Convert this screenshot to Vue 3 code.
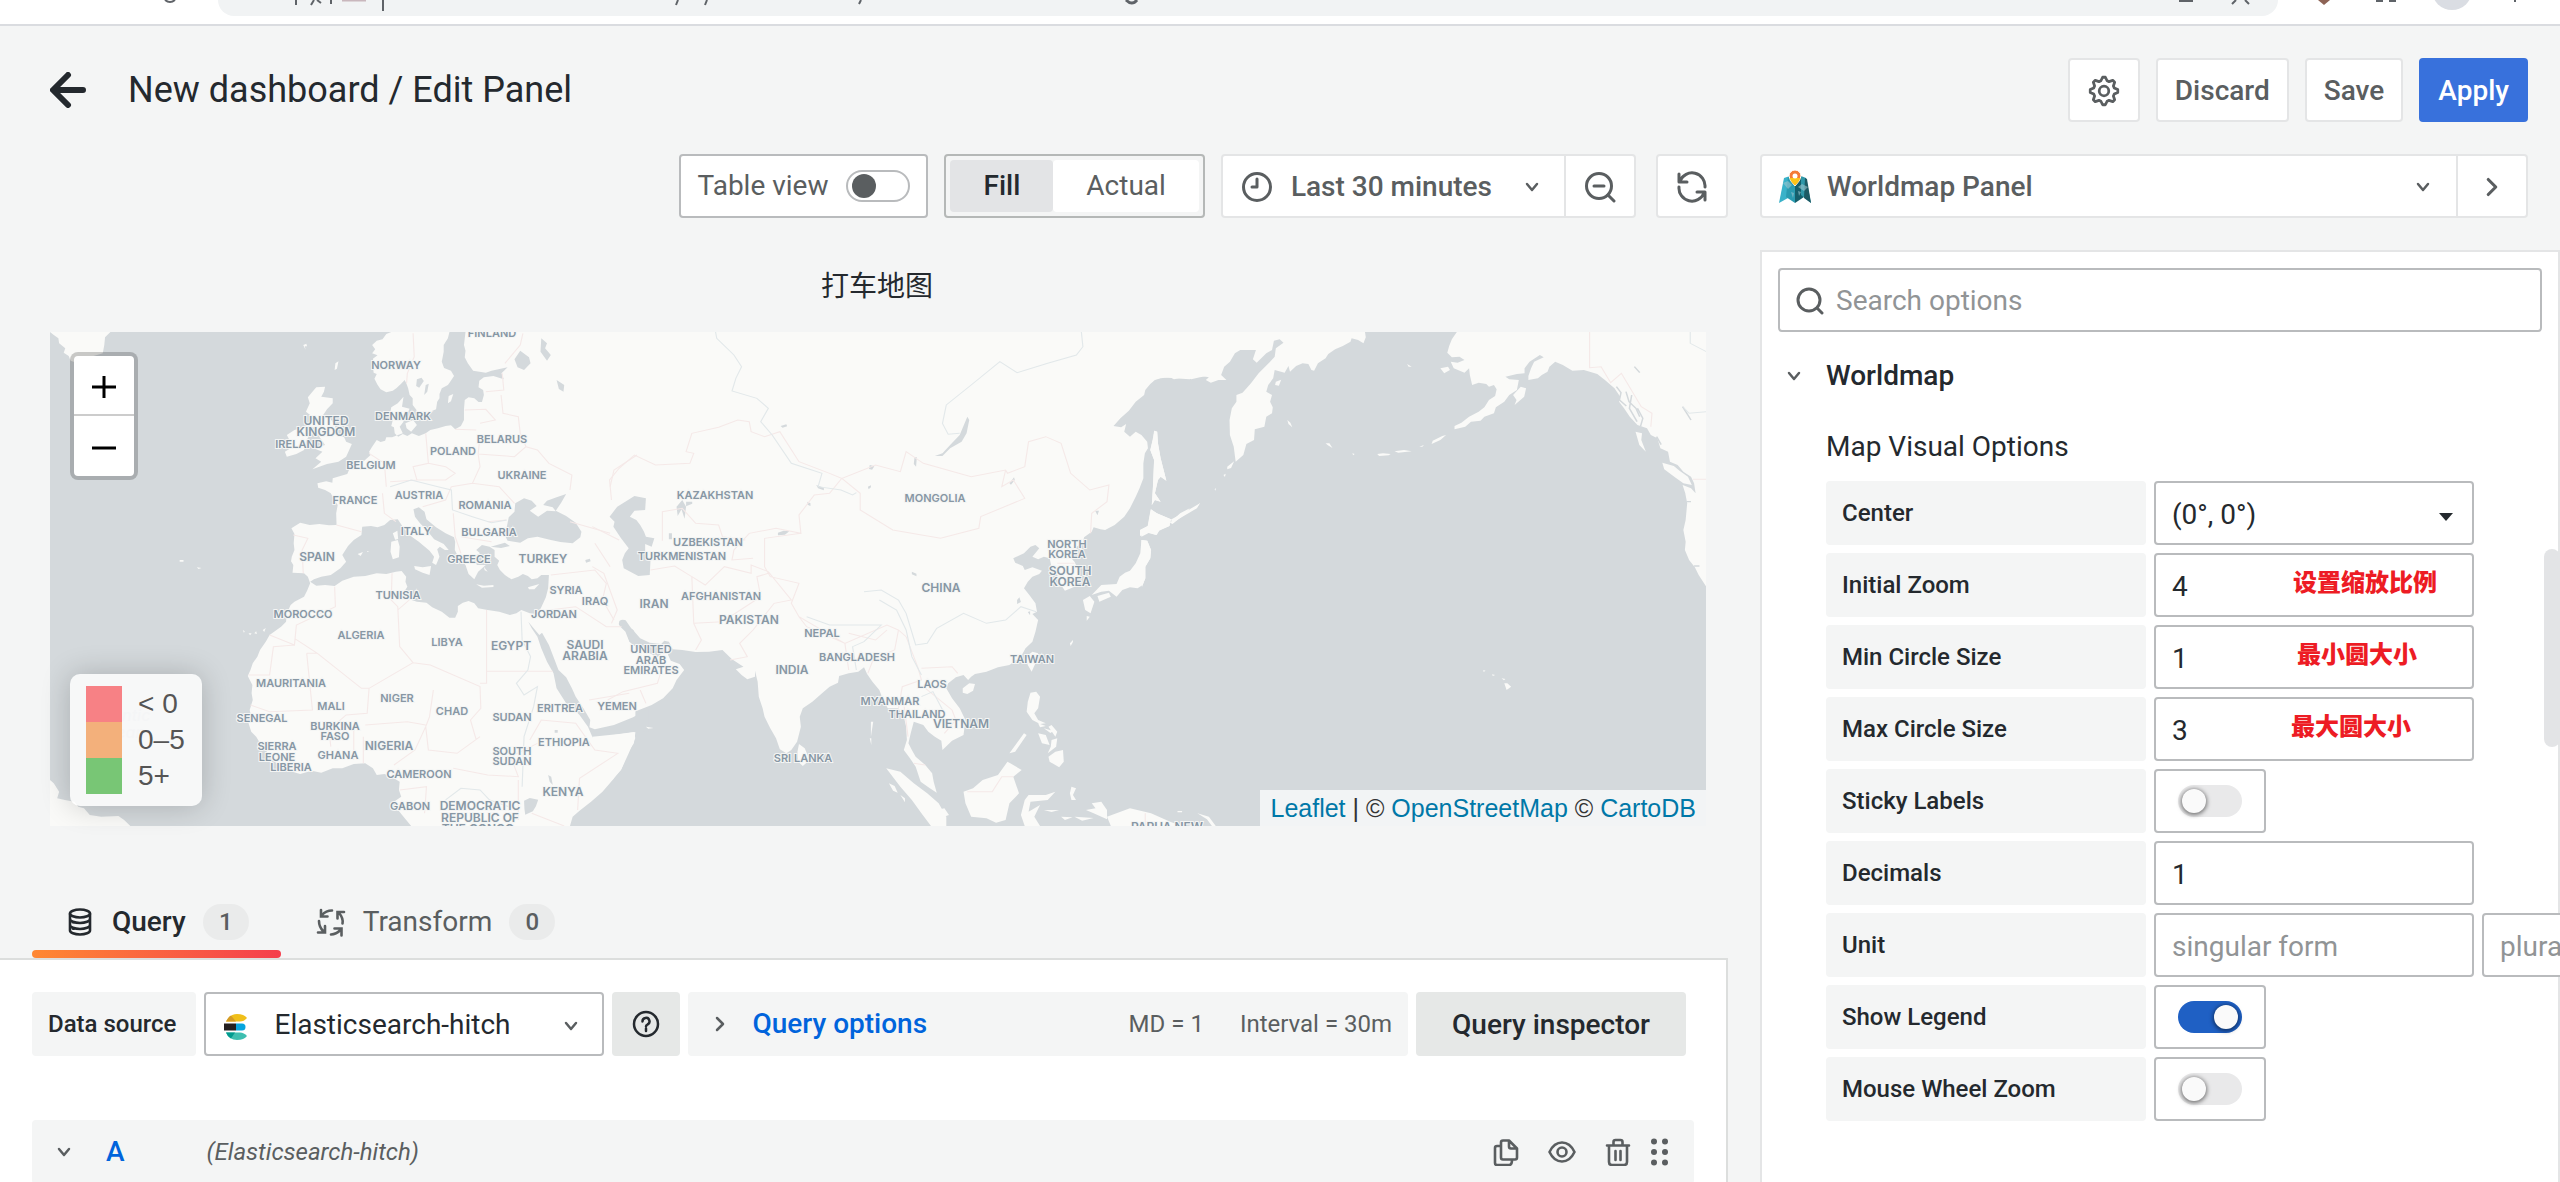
<script setup>
import { ref } from 'vue'

const tableView = ref(false)
const display = ref('Fill')
const dataSource = ref('Elasticsearch-hitch')
const center = ref('(0°, 0°)')
const search = ref('')

const options = ref([
  { id: 'center', label: 'Center', kind: 'select' },
  { id: 'zoom', label: 'Initial Zoom', kind: 'text', value: '4', note: '设置缩放比例', end: 37 },
  { id: 'min-circle', label: 'Min Circle Size', kind: 'text', value: '1', note: '最小圆大小', end: 57 },
  { id: 'max-circle', label: 'Max Circle Size', kind: 'text', value: '3', note: '最大圆大小', end: 63 },
  { id: 'sticky', label: 'Sticky Labels', kind: 'switch', value: false },
  { id: 'decimals', label: 'Decimals', kind: 'text', value: '1' },
  { id: 'unit', label: 'Unit', kind: 'unit', value: '', plural: '' },
  { id: 'legend', label: 'Show Legend', kind: 'switch', value: true },
  { id: 'wheel', label: 'Mouse Wheel Zoom', kind: 'switch', value: false }
])

const legend = [
  { text: '< 0', color: '#f77c80' },
  { text: '0–5', color: '#f2ad76' },
  { text: '5+', color: '#73c46f' }
]

const gear = (() => {
  const points = []
  const radii = [13, 13, 10, 10]
  for (let i = 0; i < 32; i++) {
    const a = ((i - 0.5) * 11.25 * Math.PI) / 180
    const r = radii[i % 4]
    points.push(`${(15 + r * Math.sin(a)).toFixed(1)} ${(15 - r * Math.cos(a)).toFixed(1)}`)
  }
  return 'M' + points.join('L') + 'Z'
})()

// country names: text, centre x, baseline y, size
const countries = [
  ['FINLAND', 442, 5, 11], ['NORWAY', 346, 37, 11], ['DENMARK', 353, 88, 11],
  ['UNITED', 276, 93, 12], ['KINGDOM', 276, 104, 12], ['IRELAND', 249, 116, 11],
  ['BELARUS', 452, 111, 11], ['POLAND', 403, 123, 11], ['BELGIUM', 321, 137, 11],
  ['UKRAINE', 472, 147, 11], ['FRANCE', 305, 172, 11], ['AUSTRIA', 369, 167, 11],
  ['ROMANIA', 435, 177, 11], ['ITALY', 366, 203, 11], ['BULGARIA', 439, 204, 11],
  ['SPAIN', 267, 229, 12], ['GREECE', 419, 231, 11], ['TURKEY', 493, 231, 12],
  ['TUNISIA', 348, 267, 11], ['SYRIA', 516, 262, 11], ['IRAQ', 545, 273, 11],
  ['MOROCCO', 253, 286, 11], ['JORDAN', 504, 286, 11], ['ALGERIA', 311, 307, 11],
  ['LIBYA', 397, 314, 11], ['EGYPT', 461, 318, 12], ['SAUDI', 535, 317, 12],
  ['ARABIA', 535, 328, 12], ['MAURITANIA', 241, 355, 11], ['NIGER', 347, 370, 11],
  ['MALI', 281, 378, 11], ['CHAD', 402, 383, 11], ['SENEGAL', 212, 390, 11],
  ['SUDAN', 462, 389, 11], ['ERITREA', 510, 380, 11], ['YEMEN', 567, 378, 11],
  ['BURKINA', 285, 398, 11], ['FASO', 285, 408, 11], ['NIGERIA', 339, 418, 12],
  ['SIERRA', 227, 418, 11], ['LEONE', 227, 429, 11], ['GHANA', 288, 427, 11],
  ['LIBERIA', 241, 439, 11], ['SOUTH', 462, 423, 11], ['SUDAN', 462, 433, 11],
  ['ETHIOPIA', 514, 414, 11], ['CAMEROON', 369, 446, 11], ['KENYA', 513, 464, 12],
  ['GABON', 360, 478, 11], ['DEMOCRATIC', 430, 478, 12], ['REPUBLIC OF', 430, 490, 12],
  ['THE CONGO', 428, 501, 12], ['KAZAKHSTAN', 665, 167, 11], ['UZBEKISTAN', 658, 214, 11],
  ['TURKMENISTAN', 632, 228, 11], ['IRAN', 604, 276, 12], ['AFGHANISTAN', 671, 268, 11],
  ['PAKISTAN', 699, 292, 12], ['UNITED', 601, 321, 11], ['ARAB', 601, 332, 11],
  ['EMIRATES', 601, 342, 11], ['NEPAL', 772, 305, 11], ['BANGLADESH', 807, 329, 11],
  ['INDIA', 742, 342, 12], ['SRI LANKA', 753, 430, 11], ['MYANMAR', 840, 373, 11],
  ['LAOS', 882, 356, 11], ['THAILAND', 867, 386, 11], ['VIETNAM', 911, 396, 12],
  ['CHINA', 891, 260, 12], ['MONGOLIA', 885, 170, 11], ['NORTH', 1017, 216, 11],
  ['KOREA', 1017, 226, 11], ['SOUTH', 1020, 243, 12], ['KOREA', 1020, 254, 12],
  ['TAIWAN', 982, 331, 11], ['PAPUA NEW', 1117, 499, 12]
]
</script>

<template>
  <div class="app">
    <svg class="sprite" aria-hidden="true">
      <symbol id="down" viewBox="0 0 16 16"><path d="M3 5l5 6 5-6" fill="none" stroke="currentColor" stroke-width="2.500" stroke-linecap="round" stroke-linejoin="round" /></symbol>
      <symbol id="right" viewBox="0 0 16 16"><path d="M5 2l6 6-6 6" fill="none" stroke="currentColor" stroke-width="2.500" stroke-linecap="round" stroke-linejoin="round" /></symbol>
    </svg>

    <div class="browser">
      <svg class="marks left" width="700" height="8" viewBox="0 0 700 8" fill="none" stroke="#5f6368" stroke-width="2">
        <path d="M-54 0q5 4 10 0M77 0v5M95 0l-3 5M98 0l4 3M112 0v4M164 0v11" />
        <path d="M123 0h24" stroke="#c9b7bd" stroke-width="3" />
        <path d="M459 0l-2 5M488 0l-2 5M642 0l-2 4" />
      </svg>
      <svg class="marks mid" width="16" height="8" viewBox="0 0 16 8"><path d="M2 0q6 6 11 0" fill="none" stroke="#5f6368" stroke-width="3" /></svg>
      <svg class="marks end" width="400" height="18" viewBox="0 0 400 18" fill="none" stroke="#5f6368" stroke-width="2">
        <path d="M20 0v1h12v-1M76 0l-4 4M85 0l4 4M216 1h7M229 1h7M355 0v2" />
        <path d="M158 0l6 5 6-5z" fill="#8d6355" stroke="none" />
        <circle cx="292" cy="-10" r="20" fill="#dadde3" stroke="none" />
      </svg>
    </div>

    <header class="header">
      <button class="back" aria-label="Back">
        <svg width="36" height="36" viewBox="0 0 36 36"><path d="M33 18H4M18 3L3 18l15 15" fill="none" stroke="currentColor" stroke-width="6" stroke-linecap="round" stroke-linejoin="round" /></svg>
      </button>
      <h1>New dashboard / Edit Panel</h1>
      <div class="actions">
        <button class="btn cog" aria-label="Settings">
          <svg width="32" height="32" viewBox="0 0 30 30" fill="none" stroke="currentColor" stroke-width="2.600" stroke-linejoin="round"><path :d="gear" /><circle cx="15" cy="15" r="4.500" /></svg>
        </button>
        <button class="btn">Discard</button>
        <button class="btn">Save</button>
        <button class="btn primary">Apply</button>
      </div>
    </header>

    <main class="body">
      <section class="left">
        <div class="toolbar">
          <label class="table-view">Table view <input v-model="tableView" class="switch outlined" type="checkbox"></label>
          <div class="radio">
            <label v-for="d in ['Fill', 'Actual']" :key="d" :class="{ on: display === d }"><input v-model="display" type="radio" name="display" :value="d">{{ d }}</label>
          </div>
          <div class="group">
            <button class="btn time">
              <svg width="32" height="32" viewBox="0 0 32 32" fill="none" stroke="currentColor" stroke-width="3"><circle cx="16" cy="16" r="13.5" /><path d="M16 8v8h-5" stroke-linecap="round" stroke-linejoin="round" /></svg>
              Last 30 minutes
              <svg class="caret" width="16" height="16"><use href="#down" /></svg>
            </button>
            <button class="btn tool" aria-label="Zoom out">
              <svg width="32" height="32" viewBox="0 0 32 32" fill="none" stroke="currentColor" stroke-width="3" stroke-linecap="round"><circle cx="15" cy="15" r="12.5" /><path d="M24 24l6 6M10 15h10" /></svg>
            </button>
          </div>
          <button class="btn tool refresh" aria-label="Refresh">
            <svg width="32" height="32" viewBox="0 0 32 32" fill="none" stroke="currentColor" stroke-width="3" stroke-linecap="round" stroke-linejoin="round"><path d="M3 3v8h8M4 10A13 13 0 0 1 29 16M29 29v-8h-8M28 22A13 13 0 0 1 3 16" /></svg>
          </button>
        </div>

        <h2 class="panel-title">打车地图</h2>

        <div class="map">
          <svg class="tiles" viewBox="0 0 1656 494" preserveAspectRatio="xMinYMin slice" role="img" aria-label="World map">
            <rect width="1656" height="494" fill="#d4d9dc" />
            <!-- Europe and Africa -->
            <g transform="translate(-10 -12) scale(.38265 .33333)" fill="#fafaf8">
              <path d="M26 36H184L170 52 168 75 164 100 140 108 110 118 95 128 80 122 75 108 62 98 66 85 50 70 48 55 36 45 26 36ZM26 1380L36 1390 50 1415 45 1435 65 1440 90 1445 100 1460 115 1465 130 1485 160 1490 205 1488 220 1500 236 1518H26Z" />
              <path d="M918 36L905 42 895 58 880 62 868 75 876 88 868 100 882 106 870 116 872 128 884 132 870 142 872 158 880 162 874 176 882 194 890 208 905 217 922 212 932 204 945 190 953 180 958 192 962 205 966 225 974 235 974 255 984 270 982 282 992 287 1004 288 1008 278 1018 276 1035 268 1038 245 1044 235 1044 222 1050 205 1066 195 1072 185 1082 168 1074 152 1056 144 1050 125 1055 95 1055 75 1066 55 1070 36Z" />
              <path d="M1112 36L1108 75 1112 92 1110 112 1118 130 1132 152 1165 158 1180 152 1222 142 1206 160 1212 178 1185 168 1160 172 1148 182 1146 202 1158 210 1160 225 1155 246 1146 246 1135 235 1120 232 1110 240 1108 268 1108 300 1100 318 1085 328 1074 316 1060 318 1040 325 1020 330 1008 340 990 348 972 340 960 348 948 342 936 350 927 340 925 322 918 318 922 300 914 285 918 262 935 250 950 230 946 260 966 266 960 280 948 288 950 305 940 320 948 340 920 352 905 352 902 362 890 366 880 360 868 380 860 395 864 405 840 430 812 438 803 462 785 468 765 475 764 488 748 484 725 490 727 503 745 510 760 520 768 538 778 555 774 580 775 615 755 616 730 612 705 615 680 608 657 625 665 642 663 670 665 690 658 710 656 724 662 735 660 758 690 760 700 770 706 790 698 812 690 830 665 845 655 855 645 880 643 905 630 920 600 945 590 965 575 990 568 1010 556 1030 550 1050 543 1068 555 1095 553 1120 556 1140 548 1170 552 1190 545 1210 552 1235 565 1250 578 1275 590 1290 600 1310 625 1338 650 1352 680 1362 710 1352 735 1358 765 1345 790 1345 820 1332 850 1330 870 1345 880 1365 900 1362 915 1368 940 1385 938 1410 944 1430 925 1445 932 1465 950 1490 970 1518H1385L1392 1490 1410 1472 1440 1445 1470 1415 1498 1378 1520 1345 1535 1300 1552 1270 1556 1237V36Z" />
              <path d="M712 215L722 202 745 200 742 215 735 230 765 235 765 250 750 268 740 285 760 298 770 315 780 345 795 352 800 365 815 372 808 390 800 410 780 425 750 432 730 440 712 448 735 425 720 415 738 395 715 385 745 375 730 350 722 325 700 318 712 290 695 275 705 250 700 232ZM645 345L665 330 690 322 708 335 695 365 690 390 670 402 645 410 640 395 655 385 645 372 652 360ZM640 965L650 960V965ZM530 930l5 4-2 4zM545 940l8 0-4 6zM560 940l5 -6 2 8zM582 930l8-6-4 12zM365 720h10v5h-10zM410 742l12 2-8 3zM688 75l8-4 2 8-6 0 2 10zM772 130l8-6-4 22-6 4z" />
              <g fill="#d4d9dc">
                <path d="M706 785L722 797 745 795 770 798 790 782 820 770 850 768 880 760 905 762 930 755 945 753 957 770 955 785 960 800 950 818 965 838 985 845 1010 848 1025 862 1050 875 1070 893 1085 893 1092 875 1092 858 1105 848 1120 843 1135 850 1145 865 1170 870 1200 875 1228 885 1245 880 1258 870 1280 880 1300 882 1310 862 1322 832 1328 805 1330 765 1310 765 1300 775 1285 778 1275 768 1262 762 1250 770 1232 778 1215 765 1202 750 1195 735 1200 722 1188 710 1188 690 1175 680 1155 675 1140 690 1150 700 1130 712 1142 735 1165 735 1145 755 1135 778 1120 762 1112 735 1095 715 1084 690 1085 665 1082 652 1060 640 1035 622 1010 598 1005 575 990 562 976 568 980 590 992 608 1012 632 1030 658 1055 672 1068 690 1058 690 1045 680 1038 688 1044 710 1035 735 1025 728 1030 710 1018 692 990 665 965 645 948 620 935 598 915 600 900 615 882 622 865 618 842 620 840 645 820 660 805 678 790 705 800 725 785 745 760 765 735 770 716 778Z" />
                <path d="M1242 550L1265 535 1285 542 1298 558 1280 572 1302 590 1325 572 1348 574 1340 562 1315 555 1325 542 1350 532 1375 522 1362 548 1348 572 1375 588 1400 608 1415 635 1412 652 1392 670 1360 666 1335 660 1300 650 1275 655 1255 668 1222 662 1212 640 1220 620 1225 592 1240 575ZM1178 680L1215 668 1228 678 1205 684ZM1276 905L1290 925 1305 945 1312 938 1330 975 1340 1005 1355 1050 1375 1072 1390 1105 1400 1130 1420 1165 1438 1200 1436 1222 1450 1228 1500 1215 1550 1192 1590 1165V1235L1552 1237 1500 1245 1465 1262 1445 1255 1432 1220 1410 1185 1395 1168 1375 1150 1350 1105 1342 1060 1325 1025 1310 985 1300 950 1285 925Z" />
                <path d="M1492 575L1535 535 1575 530V770L1540 752 1522 735 1525 700 1540 685 1515 650 1505 615 1492 605ZM1515 898L1530 900 1545 925 1568 945V990L1540 965 1530 935 1512 915ZM1240 118L1255 92 1278 112 1282 130 1265 150 1248 142ZM1310 55L1325 70 1320 85 1335 105 1325 122 1308 95ZM985 178l12-5 6 10-12 20-8-5zM1350 180l20 15-2 20-12-8zM1008 195l8-4-4 24-8 10zM1265 1442l15-8 22 5-6 20-8 15-20 10-2-18zM1328 1365l8 5 4 25-8-10zM1345 1230h8v8h-8zM1425 720l12-4 2 8-12 4zM1465 735l10 5 0 15-8-4z" />
              </g>
              <path d="M918 665L935 660 940 680 938 712 922 718 916 695ZM922 640l12-8 2 25-8 2zM978 738L1000 742 1022 738 1018 765 1000 758 980 748ZM1140 793l20 4 25-2 0 6-30 2zM1275 802L1305 792 1292 808 1278 808ZM830 702l14-6-6 12zM855 693l6 3h-6zM955 310L975 300 985 315 970 335 958 325ZM1068 228l12-6-6 22-8 6zM1170 700l10 5-8 10zM1160 740l10 15-8-4z" />
            </g>
            <!-- Asia -->
            <g transform="translate(550 -12) scale(.38265 .33333)" fill="#fafaf8">
              <path d="M-20 36H1620V170L1600 165 1568 172 1545 178 1530 170 1500 178 1490 172 1465 175 1450 180 1438 192 1425 210 1422 225 1400 245 1382 272 1360 295 1342 318 1362 322 1375 312 1370 335 1385 350 1400 335 1415 345 1430 365 1432 385 1424 400 1420 430 1420 475 1410 505 1400 530 1385 565 1370 590 1345 615 1320 630 1308 628 1290 622 1285 635 1265 652 1262 668 1220 700 1240 725 1250 750 1248 785 1240 800 1215 812 1208 800 1195 765 1180 740 1175 715 1160 710 1145 718 1130 710 1148 685 1138 675 1125 680 1108 700 1080 715 1085 728 1105 738 1110 750 1130 742 1155 752 1148 762 1130 770 1118 785 1108 805 1122 825 1138 850 1142 875 1130 882 1145 900 1138 935 1130 965 1112 985 1100 1010 1070 1035 1040 1042 1010 1055 980 1062 970 1070 962 1080 950 1065 930 1072 910 1090 905 1105 920 1135 940 1165 955 1200 950 1245 920 1262 895 1290 892 1262 875 1250 858 1235 845 1215 820 1205 812 1240 806 1270 815 1290 825 1310 850 1335 868 1360 872 1385 880 1418 862 1405 838 1385 825 1340 810 1315 794 1290 802 1260 800 1220 795 1195 780 1165 752 1165 740 1140 730 1110 712 1085 698 1062 690 1042 675 1055 650 1060 625 1068 622 1088 600 1100 575 1125 555 1145 530 1165 522 1190 525 1220 515 1265 500 1290 487 1300 470 1288 460 1255 445 1225 430 1190 425 1165 415 1130 412 1085 405 1052 405 1070 385 1078 370 1065 355 1048 375 1040 345 1018 320 990 285 995 250 996 215 990 190 988 180 965 168 962 160 972 130 968 105 955 90 935 78 905 60 898 45 905 55 925 72 955 85 990 110 985 130 1000 150 1012 165 995 180 970 178 1005 185 1022 208 1032 220 1050 200 1080 190 1105 165 1135 135 1155 80 1180 40 1205 -20 1222ZM-20 1250L50 1242 90 1236 92 1255 75 1300 55 1350 20 1395-20 1425Z" />
              <path d="M520 1272L535 1285 548 1320 530 1338 518 1325 516 1295ZM948 1105L965 1090 980 1092 975 1112 960 1122 948 1118ZM1112 1012L1130 995 1145 1000 1138 1030 1128 1055 1118 1035ZM1125 1118L1140 1115 1150 1130 1145 1165 1135 1180 1145 1200 1165 1210 1150 1212 1130 1200 1115 1175 1118 1145ZM1180 1215L1195 1235 1190 1250 1172 1220ZM1145 1240L1165 1245 1175 1275 1155 1270ZM1180 1260L1195 1255 1192 1280 1170 1300 1178 1280ZM1172 1310L1190 1295 1210 1290 1212 1325 1200 1342 1175 1325ZM1108 1240L1115 1245 1085 1295 1070 1300ZM1145 1210l20 8-15 4zM1160 1225l25 8-8 6z" />
              <path d="M748 1345L785 1355 820 1390 855 1420 885 1450 905 1490V1518H865L840 1480 815 1440 785 1400 765 1370ZM950 1415L975 1405 1000 1380 1040 1365 1065 1325 1102 1350 1080 1370 1095 1420 1070 1450 1060 1500 1035 1508 1010 1495 970 1490 955 1450ZM1110 1440L1120 1425 1165 1425 1190 1415 1170 1440 1125 1445 1120 1475 1150 1455 1135 1490 1150 1518H1110L1100 1485ZM1232 1400l12 5-8 20 8 15-12 0-4-20zM1285 1450L1310 1445 1325 1470 1325 1498 1290 1480 1270 1470 1295 1465ZM1325 1490L1385 1465 1440 1480 1490 1505 1520 1518H1335ZM880 1470L900 1465 912 1485 895 1492ZM1205 1490l30 2-20 8zM1240 1490l50 4-30 8zM1160 1470l40 0-20 6zM755 1390l15 8 8 20-12-6zM785 1425l12 10 0 12zM708 1205l6 0-6 45zM705 1255l4 0v20zM120 1220l20 4-14 2z" />
              <path d="M1448 332L1456 335 1458 370 1465 415 1480 482 1465 470 1458 480 1450 520 1465 545 1450 540 1442 555 1445 500 1448 420 1438 390 1445 360ZM1440 568L1455 580 1492 598 1488 618 1462 630 1455 645 1435 638 1415 650 1412 630 1432 618ZM1415 660L1430 662 1440 690 1438 715 1425 740 1425 775 1418 795 1405 805 1385 802 1365 810 1350 830 1330 812 1310 815 1285 825 1310 795 1350 792 1358 770 1372 758 1385 752 1400 730 1412 700ZM1300 828L1330 818 1335 830 1305 845ZM1262 840L1280 828 1292 845 1282 880 1268 870ZM1272 888l8 2-8 12zM1228 970l8-10 0 6-6 12zM1490 600L1530 575 1568 550 1560 565 1500 605Z" />
              <g fill="#d4d9dc">
                <path d="M45 560L90 528 120 535 118 570 90 572 78 590 95 600 105 615 115 635 120 650 142 655 135 680 118 672 118 700 132 720 130 765 100 768 62 745 58 720 65 700 75 685 55 655 35 620 38 605 25 590 35 575ZM200 560l15-20 10 20-4 36-8-28-10 20zM225 545h16v6l-16 8zM465 638l15-6 15 2-12 10-18 2zM960 290L965 300 958 340 945 365 915 385 895 408 875 408 895 400 915 375 940 345ZM822 412l6 0-2 28-6-8zM705 435l12 4-6 10-8-2zM815 755l12 6v8l-12-6zM542 545l8 5 0 8-8-4zM472 318l15-5 2 6-12 4zM180 640h8v18h-8zM1070 490l12-18 2 8-10 14zM1294 572l10 0-4 14zM565 495l20 8 0 8-15-6zM700 500l8-4 0 6-6 6zM1090 840l6-8 4 14-10 6zM1118 876l6-2 0 12z" />
              </g>
            </g>
            <!-- Pacific rim -->
            <g transform="translate(1090 -12) scale(.38265 .33333)" fill="#fafaf8">
              <path d="M-40 36H588L590 52 584 70 570 60 553 55 550 65 530 78 510 88 492 102 485 115 465 130 455 152 448 150 440 132 425 130 408 138 392 155 388 138 378 158 352 150 348 175 335 195 330 215 345 225 340 245 347 262 345 280 330 290 325 320 300 328 298 360 278 372 270 405 250 425 245 380 235 345 234 300 240 265 252 245 252 225 268 218 290 190 310 160 340 125 352 110 355 85 375 68 365 58 350 62 345 90 330 100 305 128 295 118 303 90 280 90 262 90 248 100 235 125 220 140 212 165 226 180 205 180 185 188 172 180 180 172 145 165 130 178 90 175 60 172 40 178-40 250Z" />
              <path d="M828 36L815 58 808 78 803 98 815 112 835 110 848 120 830 128 812 125 820 145 848 158 860 145 862 165 868 195 885 188 905 192 912 200 925 195 932 208 928 228 912 240 900 262 885 275 860 290 840 308 822 318 822 328 850 320 865 305 890 302 900 290 925 280 930 262 952 245 965 225 985 210 990 180 965 178 955 170 985 162 1005 160 1005 145 1018 125 1045 105 1055 112 1030 125 1022 145 1015 168 1015 180 1040 175 1050 165 1065 155 1070 140 1085 125 1105 135 1130 152 1160 150 1195 162 1215 180 1240 205 1255 230 1252 245 1265 265 1280 290 1300 315 1325 325 1335 345 1352 355 1360 385 1380 395 1385 425 1405 435 1420 455 1440 470 1448 490 1452 520 1440 505 1418 495 1425 520 1430 550 1426 600 1420 630 1426 665 1424 690 1435 720 1450 742 1460 765 1480 800V36Z" />
              <path d="M1365 428L1395 438 1410 452 1432 470 1442 495 1420 490 1398 472 1370 448ZM1295 335L1312 340 1310 360 1322 395 1305 375ZM785 145l20-5 5 10-15 10zM975 225l20-25 14 5-5 25-25 25 5-15zM698 132l12 8h-8zM385 300l8 8 5 14-10-10zM485 370h10l8 14-12-8zM555 400l6 2-4 4zM575 405l10 8zM620 402l15-2 20 2-5 4-25 2zM665 394l25-4 20 4-35 4zM765 362L790 348 800 345 785 360 762 372ZM730 380l12-5-4 5zM228 440l18-16-8 20-10 4zM218 465l6-4-2 10zM195 508l4-4-2 8zM145 562l12-14-8 14zM78 608L105 580 130 565 120 580 85 612ZM355 185l14-6-6 18-10-2zM952 1090L960 1090 970 1100 958 1110ZM945 1075l10 2-4 4zM920 1063l8 2-6 3zM897 1050l6 2-5 4zM-20 1480L35 1495 80 1518H-20ZM150 1480L180 1490 198 1518H188L175 1498ZM98 1473h12v4h-12z" />
              <path d="M38 332L45 335 47 370 54 415 69 482 54 470 47 480 39 520 54 545 39 540 31 555 34 500 37 420 27 390ZM28 568L44 580 81 598 77 618 50 632 42 645 20 638 0 648V630L20 618ZM4 660L19 662 29 690 27 715 14 740 14 775 5 802Z" />
              <path d="M1245 200l12 18-4 22 18 18M1270 215l8 30 18 20 10 25M1285 225l-6 40 20 40M1300 265l14 30-6 24M1418 260l22 40M1292 140l14 18M1350 350l12 24M1440 545h-12M1462 738h-14" fill="none" stroke="#d4d9dc" stroke-width="4" />
            </g>
            <g fill="none" stroke="#f5e9e8" stroke-width="1">
              <g transform="translate(-10 -12) scale(.38265 .33333)" stroke-width="3">
                <path d="M975 40L978 110 960 160 958 190M1262 40L1255 75 1215 130M1208 160L1212 210 1165 215M1110 270L1165 268 1190 300 1150 310M1205 225L1210 280 1250 290 1255 340 1270 380 1240 410 1145 402 1150 350M1085 328L1140 330M1008 340L1015 430 975 440 985 480 915 485M1015 430L1060 440 1085 460 1060 480 985 480M1145 402L1150 440 1130 490 1075 500M1270 380L1300 390 1330 430 1390 465 1385 510M1130 490L1200 500 1240 550M1075 500L1060 540 1000 560M895 520L900 580 930 605M860 400L900 430 905 500M775 615L840 635M662 645L700 655 685 690 688 760M1080 580L1085 650 1100 700M1100 650L1180 665M1170 605L1218 600M770 800L772 860 670 915 665 975 600 945M665 955L725 1000 840 1105 860 1105 975 1028 940 980 935 860 918 840 920 760M935 870L965 840M975 1028L1020 1035 1150 1100 1152 1165 1125 1200 1140 1260M1167 870V1090H1150M1167 1054H1340M665 975L610 980 600 1065H545M697 1000L712 1170 600 1175 550 1155M697 1000H725M860 1105L855 1180 800 1185 755 1230 760 1280M850 1215L960 1205 1008 1215M1028 1110L1018 1190 1008 1220 980 1290 925 1335M845 1250L845 1330M820 1230V1320M1008 1220L1015 1290 1090 1300 1150 1250M1080 1345L1170 1365 1250 1370 1230 1310 1300 1270M1280 1260L1310 1200 1400 1210 1450 1290 1510 1300 1410 1375 1405 1470M940 1410L1010 1400 1005 1480M1250 1380V1500M1285 1480L1370 1518M1335 765L1450 750 1480 790 1470 840 1500 900M1330 870L1400 860 1480 920 1520 920M1435 1140L1540 1120M1385 605L1490 640M1450 670L1490 740M1490 500L1500 450 1560 405" />
                <path d="M915 500L970 480 1040 500 1075 510 1078 570 1130 590 1180 608 1220 600M1257 875L1260 960 1282 1010 1275 1050 1245 1090 1265 1125 1300 1100 1290 1160 1265 1250 1260 1400M1060 1440L1100 1405 1150 1410 1175 1440 1250 1470" stroke="#e2e8ea" />
              </g>
              <g transform="translate(550 -12) scale(.38265 .33333)" stroke-width="3">
                <path d="M30 540L25 480 50 445 90 405 145 435 235 430 245 400 225 395 240 340 310 322 360 300 390 305 395 335 430 350 470 335 520 425 600 460 632 475 720 435 785 455 800 395 845 430 970 470 1060 450 1065 460 1110 440 1120 365 1165 350 1205 370 1230 460 1280 510 1330 495 1325 545 1285 580 1282 640M632 475L680 520 680 570 765 630 890 655 990 625 995 590 1110 535 1080 480 1050 500 1060 450M632 475L600 520 560 525 520 585 525 640 460 625 390 640 350 690 345 720 400 715M525 640L430 655 430 740 445 770 520 790 500 850 520 890 640 970 750 915 780 930 770 990 715 1015 700 1060M163 662V575L215 565 250 610 310 615 320 650 380 660M132 750L195 738 240 770 245 910 265 960 250 990M240 770L275 795 325 740 395 760 395 735 440 755M245 910L320 905 420 830 410 770 440 760M440 755L500 840 455 850 400 930 365 970 385 1010 340 1020M520 890L540 920 640 970 650 1050M650 940L720 960 750 930M-20 740L10 760 45 870 30 910M20 1140L60 1115 150 1090 158 1060M105 1110L120 1150M-20 620L50 660M780 1165L790 1100 840 1080 830 1040 800 950 780 930M840 1045L920 1040 935 1060M845 1100L920 1170 930 1200 900 1240M795 1160L805 1250M960 1415L1025 1415 1050 1370 1080 1370M820 1330L850 1335M1195 730L1240 730M1425 1480V1518M1200 700L1170 690" />
                <path d="M302 36L305 55 350 105 370 140 355 175 345 213 410 235 440 265 420 305 450 345 500 430 580 460 570 500 630 510 660 525 670 518M1258 36L1262 80 1245 105 1170 130 1090 158 1045 125 970 195 905 255 895 310 910 343 940 340M690 815L735 810 780 840 800 880 825 975 855 970 880 925 950 880 1010 910 1060 900 1100 860 1140 875M730 840L775 870 800 930 815 1010 840 1065M540 890L600 915 735 915 690 965 660 980 670 1050M840 1130L870 1115 900 1180" stroke="#e2e8ea" />
              </g>
              <g transform="translate(1090 -12) scale(.38265 .33333)" stroke-width="3">
                <path d="M1175 36V143L1205 140 1230 188 1258 160 1310 260 1338 280 1335 320M1445 478H1480" />
                <path d="M1438 36V70L1480 95M1420 262L1435 280 1480 275" stroke="#e2e8ea" />
              </g>
            </g>
            <g class="countries">
              <text v-for="(c, i) in countries" :key="i" :x="c[1]" :y="c[2]" :font-size="c[3]">{{ c[0] }}</text>
              <text class="ocean" x="71" y="389" font-size="16">Atlantic</text>
              <text class="ocean" x="70" y="406" font-size="16">Ocean</text>
            </g>
          </svg>
          <div class="zoomer">
            <button aria-label="Zoom in"><svg width="24" height="24" viewBox="0 0 24 24"><path d="M12 1v22M0 12h24" stroke="#000" stroke-width="3" /></svg></button>
            <button aria-label="Zoom out map"><svg width="24" height="24" viewBox="0 0 24 24"><path d="M0 12h24" stroke="#000" stroke-width="3" /></svg></button>
          </div>
          <ul class="legend">
            <li v-for="l in legend" :key="l.text"><i :style="{ background: l.color }"></i>{{ l.text }}</li>
          </ul>
          <div class="attribution"><a href="#">Leaflet</a> | © <a href="#">OpenStreetMap</a> © <a href="#">CartoDB</a></div>
        </div>

        <nav class="tabs">
          <button class="tab active">
            <svg width="32" height="32" viewBox="0 0 32 32" fill="none" stroke="currentColor" stroke-width="2.6"><ellipse cx="16" cy="7.500" rx="10" ry="4" /><path d="M6 7.500V24.500c0 2.200 4.500 4 10 4s10-1.800 10-4V7.500M6 13c0 2.200 4.500 4 10 4s10-1.800 10-4M6 19c0 2.200 4.500 4 10 4s10-1.800 10-4" /><path d="M9.500 15.500v2M9.500 22v2" /></svg>
            Query <span class="count">1</span>
          </button>
          <button class="tab">
            <svg width="32" height="32" viewBox="0 0 32 32" fill="none" stroke="currentColor" stroke-width="2.6" stroke-linecap="round"><path d="M17 4.500Q11 4.500 7 9M6 4v6.500h6.500M27.500 17.500Q28.500 12 24 7M29 6h-6.500v6.500M4 15Q4 21 8.500 25.500M3 26.500h7v-6.500M16 28.500Q21 28.500 26 23.500M19.500 22.500h7v7" /></svg>
            Transform <span class="count">0</span>
          </button>
        </nav>

        <div class="queries">
          <div class="source-row">
            <label class="source-label" for="source">Data source</label>
            <div class="source">
              <svg class="logo" width="24" height="26" viewBox="0 0 24 26"><path d="M2 7.500Q6 0 13 0 20 0 23 4q-3 3.500-7 3.500z" fill="#f0bf1a" /><path d="M2 7.500Q4 3 7 1.500L12 7.500z" fill="#d49b26" /><path d="M0 9.500h12v7H0z" fill="#231f20" /><path d="M12 9.500h6a3.500 3.500 0 0 1 0 7h-6z" fill="#07a5de" /><path d="M2 18.500h14q4 0 7 3.500-3 4-10 4Q5 26 2 18.500z" fill="#3ebeb0" /><path d="M2 18.500h9L7 24.500Q3 22 2 18.500z" fill="#019b8f" /></svg>
              <select id="source" v-model="dataSource"><option>Elasticsearch-hitch</option></select>
              <svg class="arrow" width="16" height="16"><use href="#down" /></svg>
            </div>
            <button class="help" aria-label="Data source help">
              <svg width="28" height="28" viewBox="0 0 28 28" fill="none" stroke="currentColor" stroke-width="2.500"><circle cx="14" cy="14" r="12" /><path d="M10.500 11.500a3.500 3.500 0 1 1 5 3q-1.500.8-1.500 2M14 18.500v2.500" stroke-linecap="round" /></svg>
            </button>
            <button class="query-options">
              <svg width="16" height="16"><use href="#right" /></svg>
              <strong>Query options</strong>
              <span>MD = 1</span><span>Interval = 30m</span>
            </button>
            <button class="inspector">Query inspector</button>
          </div>
          <div class="query">
            <svg width="16" height="16"><use href="#down" /></svg>
            <strong>A</strong>
            <em>(Elasticsearch-hitch)</em>
            <div class="query-tools">
              <button aria-label="Duplicate query"><svg width="28" height="28" viewBox="0 0 28 28" fill="none" stroke="currentColor" stroke-width="2.600" stroke-linejoin="round"><path d="M11 2.500h6l8 8v9q0 2-2 2H11q-2 0-2-2v-15q0-2 2-2zM17 2.500v6q0 2 2 2h6M9 8H5q-2 0-2 2v15q0 2 2 2h12q3 0 3-5" /></svg></button>
              <button aria-label="Toggle query"><svg width="28" height="28" viewBox="0 0 28 28" fill="none" stroke="currentColor" stroke-width="2.600"><path d="M1.500 14Q6 4.500 14 4.500T26.500 14Q22 23.500 14 23.500T1.500 14z" stroke-linejoin="round" /><circle cx="14" cy="14" r="4.500" /></svg></button>
              <button aria-label="Remove query"><svg width="28" height="28" viewBox="0 0 28 28" fill="none" stroke="currentColor" stroke-width="2.600" stroke-linecap="round"><path d="M3 7.500h22M5 8v16q0 3 3 3h12q3 0 3-3V8M9.500 7V4q0-2 2-2h5q2 0 2 2v3M11.500 13v9M16.500 13v9" /></svg></button>
              <button aria-label="Reorder query"><svg width="20" height="28" viewBox="0 0 20 28" fill="currentColor"><circle cx="4" cy="3.500" r="3" /><circle cx="15" cy="3.500" r="3" /><circle cx="4" cy="14" r="3" /><circle cx="15" cy="14" r="3" /><circle cx="4" cy="24.500" r="3" /><circle cx="15" cy="24.500" r="3" /></svg></button>
            </div>
          </div>
        </div>
      </section>

      <aside class="right">
        <div class="viz group">
          <button class="btn viz-name">
            <svg width="32" height="34" viewBox="0 0 32 34">
              <path d="M5 8L11 6 9 28 0 33z" fill="#3ab2c9" /><path d="M9 7L16 14V33L7 27z" fill="#2a9bb0" /><path d="M16 14L22 6 25 27 16 33z" fill="#155f6b" /><path d="M22 6L27 8 32 33 22 25z" fill="#2f97a8" /><path d="M26 8L28 9 32 33 25 28z" fill="#1c5a64" />
              <path d="M4 13l5-2 4 4-4 4zM19 17l4-3 6 3-4 4zM12 22l3 1-1 5zM19 21l3 1-2 4z" fill="#9cc7cf" opacity=".6" />
              <path d="M16 0a6 6 0 0 1 6 6q0 4-6 10Q10 10 10 6a6 6 0 0 1 6-6z" fill="#f47b36" stroke="#fff" stroke-width="1" /><path d="M10.500 8h11Q20 12 16 15.500 12 12 10.500 8z" fill="#fcc419" /><circle cx="16" cy="6" r="2.500" fill="#fff" />
            </svg>
            <span>Worldmap Panel</span>
            <svg width="16" height="16"><use href="#down" /></svg>
          </button>
          <button class="btn viz-more" aria-label="Hide options"><svg width="20" height="20"><use href="#right" /></svg></button>
        </div>

        <div class="options">
          <div class="search">
            <svg width="28" height="28" viewBox="0 0 28 28" fill="none" stroke="currentColor" stroke-width="3" stroke-linecap="round"><circle cx="13" cy="13" r="11" /><path d="M21 21l5 5" /></svg>
            <input v-model="search" type="text" placeholder="Search options" aria-label="Search options">
          </div>
          <button class="section"><svg width="16" height="16"><use href="#down" /></svg>Worldmap</button>
          <div class="fields">
            <h3>Map Visual Options</h3>
            <div v-for="o in options" :key="o.id" class="field">
              <label :for="o.id">{{ o.label }}</label>
              <div v-if="o.kind === 'select'" class="control">
                <select :id="o.id" v-model="center"><option>(0°, 0°)</option></select>
                <svg class="arrow" width="16" height="10" viewBox="0 0 16 10"><path d="M1 1h14L8 9z" fill="#24292e" /></svg>
              </div>
              <div v-else-if="o.kind === 'switch'" class="box"><input :id="o.id" v-model="o.value" class="switch" type="checkbox"></div>
              <div v-else class="control">
                <input :id="o.id" v-model="o.value" type="text" :placeholder="o.kind === 'unit' ? 'singular form' : ''">
                <span v-if="o.note" class="note" :style="{ right: o.end + 'px' }">{{ o.note }}</span>
              </div>
              <div v-if="o.kind === 'unit'" class="control"><input v-model="o.plural" type="text" placeholder="plural form" aria-label="Plural unit"></div>
            </div>
          </div>
          <div class="thumb"></div>
        </div>
      </aside>
    </main>
  </div>
</template>

<style>
body {
  background: #f4f5f5;
}
</style>

<style scoped>
* {
  box-sizing: border-box;
}
.app {
  height: 100vh;
  overflow: hidden;
  display: flex;
  flex-direction: column;
  background: #f4f5f5;
  color: #24292e;
  font: 400 28px/40px Roboto, "Noto Sans CJK SC", sans-serif;
}
.sprite {
  position: absolute;
  width: 0;
  height: 0;
}
svg {
  flex: none;
  display: block;
}
button,
input,
select {
  margin: 0;
  font: inherit;
  color: inherit;
}
button {
  padding: 0;
  border: 0;
  background: none;
}
.browser {
  position: relative;
  flex: none;
  height: 26px;
  padding: 0 282px 8px 218px;
  border-bottom: 2px solid #dadce0;
  background: #fff;
}
.browser::before {
  content: "";
  display: block;
  height: 16px;
  border-radius: 0 0 28px 28px;
  background: #f1f3f4;
}
.marks {
  position: absolute;
  top: 0;
  overflow: visible;
}
.marks.left {
  left: 219px;
}
.marks.mid {
  left: 1124px;
}
.marks.end {
  right: 0;
}
.header {
  flex: none;
  display: flex;
  align-items: center;
  padding: 32px 32px 0 50px;
}
h1 {
  margin: 0 auto 0 42px;
  font-size: 36px;
  font-weight: 400;
}
.actions {
  display: flex;
  gap: 16px;
}
.btn {
  display: flex;
  align-items: center;
  justify-content: center;
  height: 64px;
  padding: 2px 17px 0;
  border: 2px solid #e4e5e6;
  border-radius: 4px;
  background: #fff;
  color: #5a5e60;
  font-weight: 500;
}
.cog {
  width: 72px;
}
.primary {
  border-color: #3871dc;
  background: #3871dc;
  color: #fff;
}
.body {
  flex: 1;
  min-height: 0;
  display: grid;
  grid-template-columns: minmax(0, 1fr) 800px;
  column-gap: 32px;
  padding-top: 32px;
}
.left {
  min-width: 0;
  display: flex;
  flex-direction: column;
}
.toolbar {
  display: flex;
  justify-content: flex-end;
  gap: 16px;
}
.table-view {
  display: flex;
  align-items: center;
  gap: 18px;
  height: 64px;
  padding: 0 16px;
  border: 2px solid #b9bbbd;
  border-radius: 4px;
  background: #fff;
  color: #5a5e60;
}
.radio {
  display: flex;
  padding: 4px;
  border: 2px solid #b5b8b7;
  border-radius: 4px;
}
.radio label {
  display: flex;
  align-items: center;
  padding: 0 33px;
  border-radius: 4px;
  background: #fff;
  color: #5a5e60;
}
.radio .on {
  background: #e3e4e6;
  color: #24292e;
  font-weight: 500;
}
.radio input {
  position: absolute;
  opacity: 0;
  width: 0;
}
.group {
  display: flex;
}
.group .btn:first-child {
  border-radius: 4px 0 0 4px;
}
.group .btn + .btn {
  margin-left: -2px;
  border-radius: 0 4px 4px 0;
}
.group .time {
  gap: 18px;
  padding: 2px 24px 0 18px;
}
.caret {
  margin-left: 14px;
}
.tool {
  width: 72px;
}
.refresh {
  margin-left: 4px;
}
.switch {
  appearance: none;
  position: relative;
  width: 64px;
  height: 32px;
  border-radius: 16px;
  background: #e9e9ea;
}
.switch::before {
  content: "";
  position: absolute;
  left: 4px;
  top: 4px;
  width: 24px;
  height: 24px;
  border-radius: 50%;
  background: #fafafa;
  box-shadow: 0 1px 4px 1px rgba(0, 0, 0, 0.5);
}
.switch:checked {
  background: #1f60c4;
}
.switch:checked::before {
  left: 36px;
}
.outlined {
  border: 2px solid #b9bbbd;
  background: #fff;
}
.outlined::before {
  top: 2px;
  background: #5a5e60;
  box-shadow: none;
}
.panel-title {
  margin: 48px 0 24px;
  padding-left: 26px;
  text-align: center;
  font-size: 28px;
  line-height: 42px;
  font-weight: 400;
}
.map {
  position: relative;
  margin: 0 22px 0 50px;
}
.tiles {
  width: 100%;
  height: 494px;
}
.countries {
  fill: #8797a4;
  stroke: #f4f5f4;
  stroke-width: 2px;
  paint-order: stroke;
  font-family: Inter, sans-serif;
  font-weight: 600;
  text-anchor: middle;
}
.ocean {
  fill: #c8cdd0;
  stroke: none;
  font-style: italic;
  font-weight: 500;
}
.zoomer {
  position: absolute;
  left: 20px;
  top: 20px;
  width: 68px;
  border: 4px solid rgba(0, 0, 0, 0.2);
  border-radius: 8px;
  background: #fff;
  background-clip: padding-box;
}
.zoomer button {
  display: flex;
  align-items: center;
  justify-content: center;
  width: 60px;
  height: 58px;
  padding-top: 4px;
}
.zoomer button + button {
  height: 62px;
  border-top: 2px solid #ccc;
}
.legend {
  position: absolute;
  left: 20px;
  bottom: 20px;
  margin: 0;
  padding: 12px 16px;
  width: 132px;
  border-radius: 10px;
  background: rgba(255, 255, 255, 0.8);
  box-shadow: 0 0 30px rgba(0, 0, 0, 0.2);
  list-style: none;
  font: 28px/36px "Liberation Sans", sans-serif;
  color: #555;
}
.legend li {
  display: flex;
  gap: 16px;
  white-space: nowrap;
}
.legend i {
  width: 36px;
  height: 36px;
  opacity: 0.96;
}
.attribution {
  position: absolute;
  right: 0;
  bottom: 0;
  padding: 0 10px;
  background: rgba(255, 255, 255, 0.7);
  font: 25px/36px "Liberation Sans", sans-serif;
  color: #333;
}
.attribution a {
  color: #0078a8;
  text-decoration: none;
}
.tabs {
  display: flex;
  gap: 2px;
  margin-top: 58px;
  padding-left: 32px;
  border-bottom: 2px solid #dcdedd;
}
.tab {
  position: relative;
  display: flex;
  align-items: center;
  height: 74px;
  padding: 2px 32px 0;
  color: #5a5e60;
}
.tab svg {
  margin-right: 16px;
}
.active {
  color: #24292e;
  font-weight: 500;
}
.active::after {
  content: "";
  position: absolute;
  left: 0;
  right: 0;
  bottom: 0;
  height: 8px;
  border-radius: 4px;
  background: linear-gradient(90deg, #ff8833, #f53e4c);
}
.count {
  margin-left: 17px;
  padding: 0 16px;
  min-width: 46px;
  border-radius: 18px;
  background: #eaebeb;
  color: #5a5e60;
  font-size: 24px;
  line-height: 36px;
  font-weight: 500;
}
.queries {
  flex: 1;
  padding: 32px 40px 0 32px;
  border-right: 2px solid #dcdedd;
  background: #fff;
}
.source-row {
  display: flex;
  gap: 8px;
}
.source-label {
  padding: 0 20px 0 16px;
  border-radius: 4px;
  background: #f4f5f5;
  font-size: 24px;
  line-height: 64px;
  font-weight: 500;
}
.source {
  position: relative;
  width: 400px;
}
.source select,
.control select,
.control input,
.search input {
  appearance: none;
  display: block;
  width: 100%;
  height: 64px;
  padding: 2px 16px 0;
  border: 2px solid #b9bbbd;
  border-radius: 4px;
  background: #fff;
}
.source select {
  padding-left: 68px;
}
.control select {
  padding-top: 4px;
}
.logo {
  position: absolute;
  left: 20px;
  top: 22px;
}
.arrow {
  position: absolute;
  right: 25px;
  top: 26px;
}
.source .arrow {
  color: #5a5e60;
}
.help {
  display: flex;
  align-items: center;
  justify-content: center;
  width: 68px;
  border-radius: 4px;
  background: #e6e8e7;
}
.query-options {
  flex: 1;
  display: flex;
  align-items: center;
  padding: 0 16px 0 24px;
  border-radius: 4px;
  background: #f4f5f5;
  color: #5a5e60;
  font-size: 24px;
}
.query-options strong {
  margin: 0 auto 0 24px;
  color: #0064dc;
  font-size: 28px;
  font-weight: 500;
}
.query-options span + span {
  margin-left: 36px;
}
.inspector {
  padding: 2px 36px 0;
  border-radius: 4px;
  background: #e6e8e7;
  font-weight: 500;
}
.query {
  display: flex;
  align-items: center;
  height: 64px;
  margin: 64px -8px 0 0;
  padding: 0 24px;
  border-radius: 4px;
  background: #f4f5f5;
  color: #5a5e60;
}
.query strong {
  margin: 0 82px 0 34px;
  color: #0064dc;
  font-weight: 500;
}
.query em {
  font-size: 24px;
}
.query-tools {
  display: flex;
  gap: 28px;
  margin-left: auto;
}
.query-tools button:last-child {
  margin-left: -10px;
}
.viz {
  margin-right: 32px;
}
.viz-name {
  flex: 1;
  gap: 16px;
}
.viz-name span {
  margin-right: auto;
}
.viz-name svg:last-child {
  margin-right: 8px;
}
.viz-more {
  width: 72px;
}
.right {
  display: flex;
  flex-direction: column;
  min-height: 0;
}
.options {
  position: relative;
  flex: 1;
  margin-top: 32px;
  padding: 16px;
  border: 2px solid #e4e5e6;
  border-bottom: 0;
  background: #fff;
}
.search {
  position: relative;
}
.search svg {
  position: absolute;
  left: 18px;
  top: 19px;
  color: #5a5e60;
}
.search input {
  padding: 0 16px 0 56px;
}
::placeholder {
  color: #919496;
  opacity: 1;
}
.section {
  display: flex;
  align-items: center;
  gap: 24px;
  margin-top: 24px;
  padding-left: 8px;
  font-weight: 500;
}
.section svg {
  color: #5a5e60;
}
.fields {
  padding-left: 48px;
}
h3 {
  margin: 31px 0 14px;
  font-size: 28px;
  font-weight: 400;
}
.field {
  display: flex;
  gap: 8px;
  margin-bottom: 8px;
}
.field > label {
  flex: none;
  width: 320px;
  padding-left: 16px;
  border-radius: 4px;
  background: #f4f5f5;
  font-size: 24px;
  line-height: 64px;
  font-weight: 500;
}
.control {
  position: relative;
  flex: none;
  width: 320px;
}
.control .arrow {
  right: 20px;
  top: 31px;
}
.box {
  display: flex;
  align-items: center;
  justify-content: center;
  width: 112px;
  height: 64px;
  border: 2px solid #b9bbbd;
  border-radius: 4px;
}
.note {
  position: absolute;
  top: 8px;
  color: #ed1c24;
  font: 900 24px/40px "Noto Sans CJK SC", sans-serif;
}
.thumb {
  position: absolute;
  right: -2px;
  top: 297px;
  width: 16px;
  height: 198px;
  border-radius: 8px;
  background: #e3e4e6;
}
</style>
